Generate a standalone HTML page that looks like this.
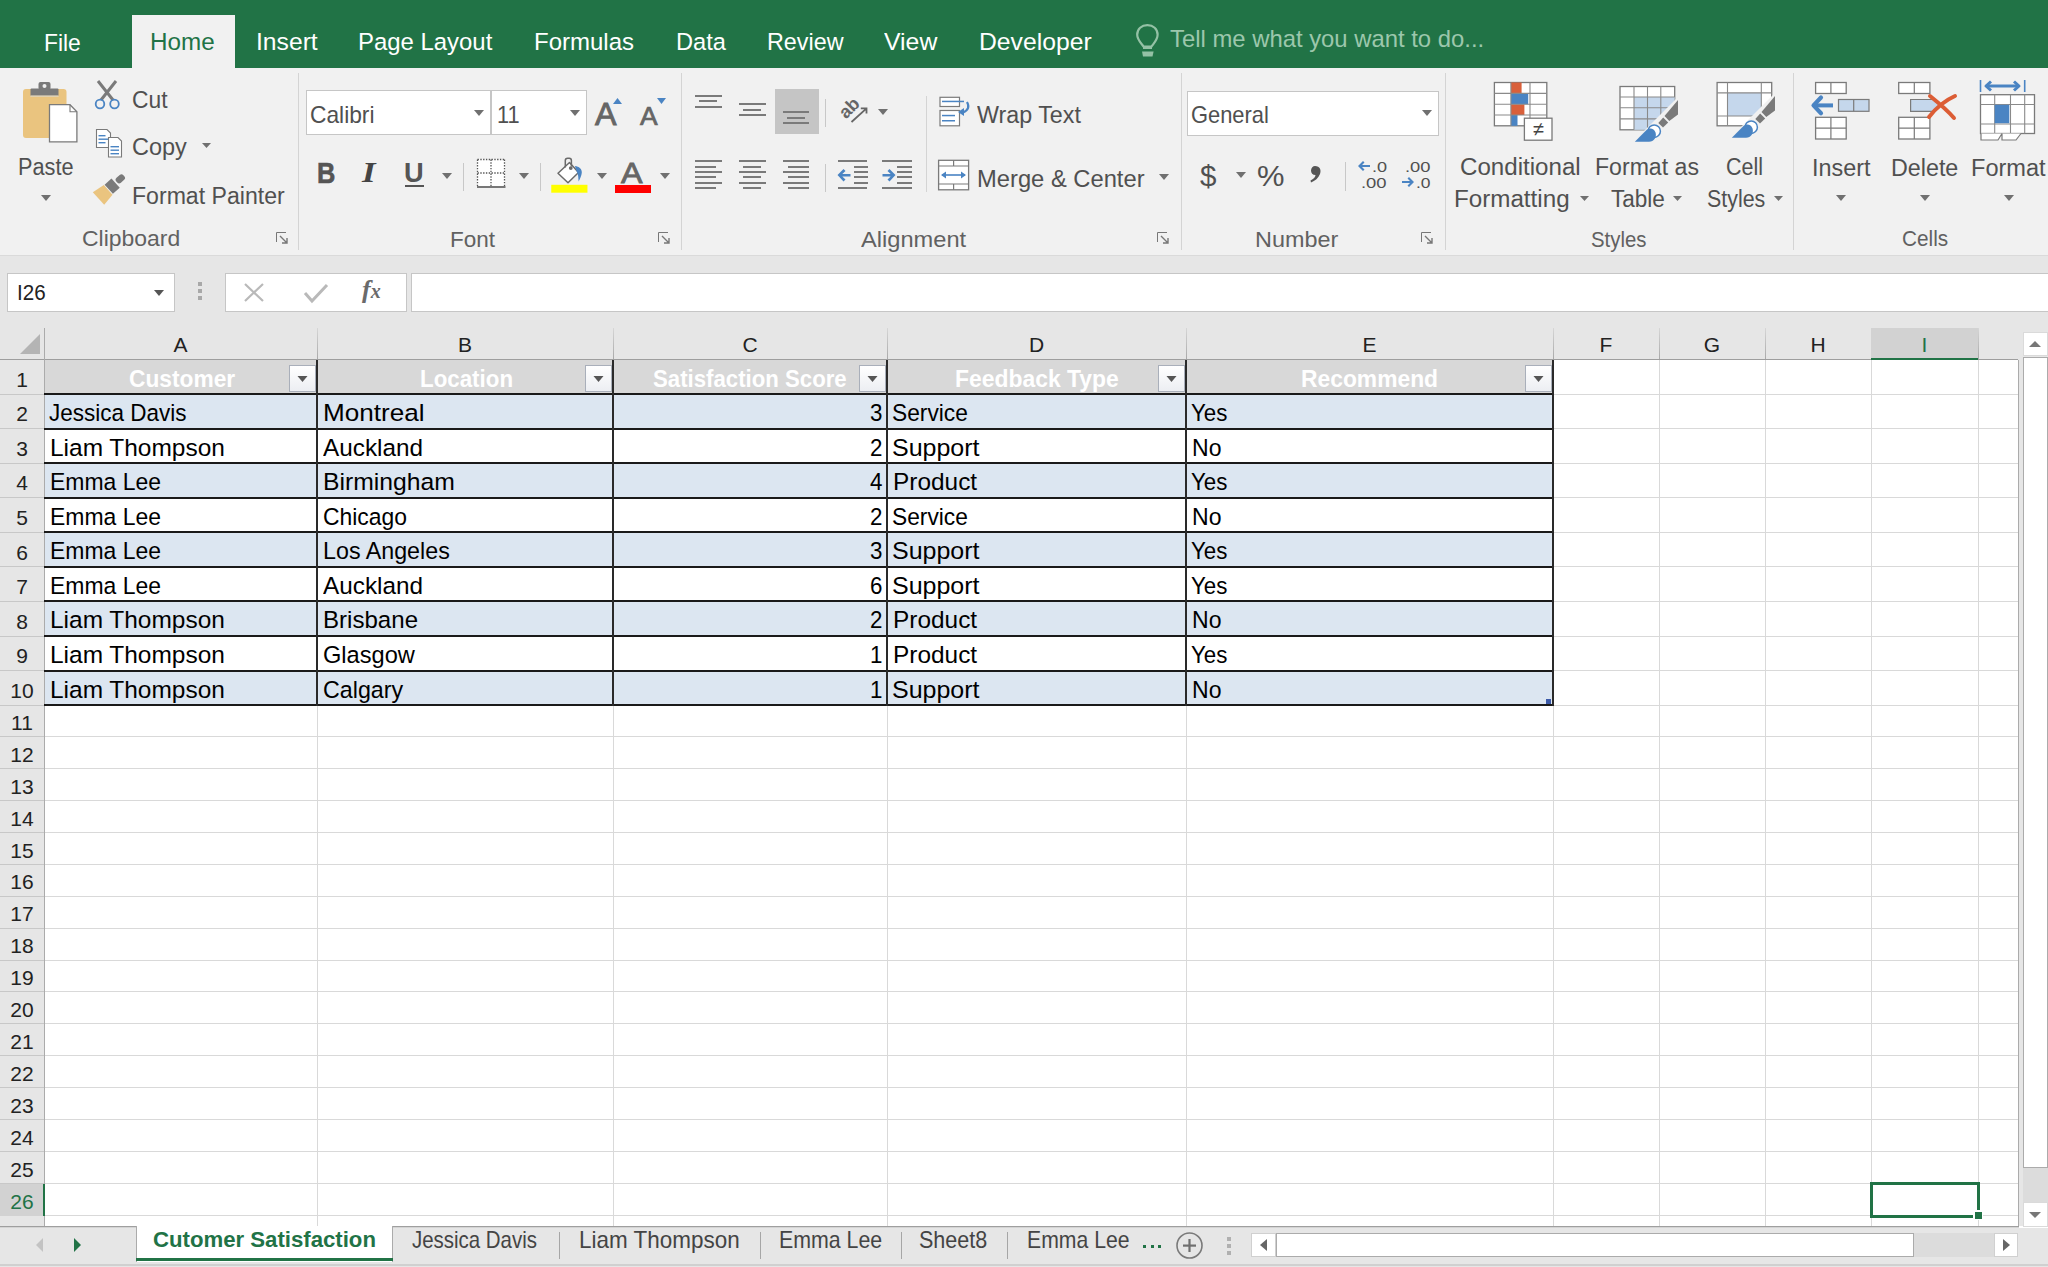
<!DOCTYPE html>
<html><head><meta charset="utf-8"><style>
html,body{margin:0;padding:0;width:2048px;height:1267px;overflow:hidden;background:#fff;}
.t{position:absolute;white-space:nowrap;line-height:1;font-family:"Liberation Sans",sans-serif;}
.r{position:absolute;}
svg{position:absolute;overflow:visible;}
</style></head><body>
<div class="r" style="left:0px;top:0px;width:2048px;height:68px;background:#217346;"></div><div class="r" style="left:132px;top:15px;width:103px;height:53px;background:#f1f1f1;"></div><div class="t" style="left:43.80px;top:31.18px;font-size:24.5px;color:#fff;font-weight:normal;transform:scaleX(0.9329);transform-origin:0 0;">File</div><div class="t" style="left:149.80px;top:30.18px;font-size:24.5px;color:#217346;font-weight:normal;transform:scaleX(0.9891);transform-origin:0 0;">Home</div><div class="t" style="left:255.90px;top:30.18px;font-size:24.5px;color:#fff;font-weight:normal;transform:scaleX(1.0073);transform-origin:0 0;">Insert</div><div class="t" style="left:358.40px;top:30.18px;font-size:24.5px;color:#fff;font-weight:normal;transform:scaleX(0.9762);transform-origin:0 0;">Page Layout</div><div class="t" style="left:534.20px;top:30.18px;font-size:24.5px;color:#fff;font-weight:normal;transform:scaleX(0.9798);transform-origin:0 0;">Formulas</div><div class="t" style="left:675.80px;top:30.18px;font-size:24.5px;color:#fff;font-weight:normal;transform:scaleX(0.9649);transform-origin:0 0;">Data</div><div class="t" style="left:767.30px;top:30.18px;font-size:24.5px;color:#fff;font-weight:normal;transform:scaleX(0.9520);transform-origin:0 0;">Review</div><div class="t" style="left:884.00px;top:30.18px;font-size:24.5px;color:#fff;font-weight:normal;transform:scaleX(1.0119);transform-origin:0 0;">View</div><div class="t" style="left:979.30px;top:30.18px;font-size:24.5px;color:#fff;font-weight:normal;transform:scaleX(1.0088);transform-origin:0 0;">Developer</div><div class="t" style="left:1170.30px;top:27.00px;font-size:24px;color:#9cc7ac;font-weight:normal;transform:scaleX(0.9937);transform-origin:0 0;">Tell me what you want to do...</div><svg style="left:1134px;top:23px" width="28" height="36"><path d="M9.5,23.5 C6.5,19.5 3.2,16.5 3.2,11.8 C3.2,5.8 7.6,2.2 13.4,2.2 C19.2,2.2 23.6,5.8 23.6,11.8 C23.6,16.5 20.5,19.5 17.5,23.5 Z" fill="none" stroke="#94c1a5" stroke-width="2.2" stroke-linejoin="round"/><rect x="9" y="23.5" width="9" height="2.5" fill="#94c1a5"/><polygon points="8,28.5 19.6,28.5 18.5,33.5 9,33.5" fill="#94c1a5"/></svg><div class="r" style="left:0px;top:68px;width:2048px;height:188px;background:#f1f1f1;"></div><div class="r" style="left:0px;top:255px;width:2048px;height:2px;background:#dadada;"></div><div class="r" style="left:298px;top:73px;width:1px;height:177px;background:#d4d4d4;"></div><div class="r" style="left:681px;top:73px;width:1px;height:177px;background:#d4d4d4;"></div><div class="r" style="left:1181px;top:73px;width:1px;height:177px;background:#d4d4d4;"></div><div class="r" style="left:1445px;top:73px;width:1px;height:177px;background:#d4d4d4;"></div><div class="r" style="left:1793px;top:73px;width:1px;height:177px;background:#d4d4d4;"></div><div class="t" style="left:81.80px;top:228.38px;font-size:22.5px;color:#616161;font-weight:normal;transform:scaleX(1.0197);transform-origin:0 0;">Clipboard</div><svg style="left:276px;top:232px" width="13" height="13"><path d="M0.5,10 V0.5 H10" fill="none" stroke="#777" stroke-width="1"/><path d="M4,4 L11,11 M11,6 V11 H6" fill="none" stroke="#777" stroke-width="1.4"/></svg><div class="t" style="left:450.15px;top:228.80px;font-size:22px;color:#616161;font-weight:normal;transform:scaleX(1.0239);transform-origin:0 0;">Font</div><svg style="left:658px;top:232px" width="13" height="13"><path d="M0.5,10 V0.5 H10" fill="none" stroke="#777" stroke-width="1"/><path d="M4,4 L11,11 M11,6 V11 H6" fill="none" stroke="#777" stroke-width="1.4"/></svg><div class="t" style="left:860.90px;top:228.57px;font-size:22.5px;color:#616161;font-weight:normal;transform:scaleX(1.0509);transform-origin:0 0;">Alignment</div><svg style="left:1157px;top:232px" width="13" height="13"><path d="M0.5,10 V0.5 H10" fill="none" stroke="#777" stroke-width="1"/><path d="M4,4 L11,11 M11,6 V11 H6" fill="none" stroke="#777" stroke-width="1.4"/></svg><div class="t" style="left:1254.60px;top:228.57px;font-size:22.5px;color:#616161;font-weight:normal;transform:scaleX(1.0402);transform-origin:0 0;">Number</div><svg style="left:1421px;top:232px" width="13" height="13"><path d="M0.5,10 V0.5 H10" fill="none" stroke="#777" stroke-width="1"/><path d="M4,4 L11,11 M11,6 V11 H6" fill="none" stroke="#777" stroke-width="1.4"/></svg><div class="t" style="left:1590.90px;top:228.80px;font-size:22px;color:#616161;font-weight:normal;transform:scaleX(0.9258);transform-origin:0 0;">Styles</div><div class="t" style="left:1901.50px;top:228.40px;font-size:22px;color:#616161;font-weight:normal;transform:scaleX(0.9438);transform-origin:0 0;">Cells</div><svg style="left:18px;top:78px" width="64" height="68">
<rect x="5" y="11" width="43.5" height="49" rx="3" fill="#eac47f"/>
<rect x="12.5" y="10.5" width="28" height="8" rx="1" fill="#7a7a7a"/>
<rect x="20.5" y="4" width="12" height="8" rx="2" fill="#7a7a7a"/>
<circle cx="26.5" cy="8" r="2" fill="#f0f0f0"/>
<rect x="12.5" y="17.5" width="28" height="1.2" fill="#f7e7c6"/>
<path d="M31.5,26.7 H52 L58.9,33.7 V63.8 H31.5 Z" fill="#fff" stroke="#7a7a7a" stroke-width="1.3"/>
<path d="M52,26.7 V33.7 H58.9" fill="none" stroke="#7a7a7a" stroke-width="1.1"/>
</svg><div class="t" style="left:17.50px;top:156.15px;font-size:23px;color:#505050;font-weight:normal;transform:scaleX(0.9444);transform-origin:0 0;">Paste</div><svg style="left:41.0px;top:195.0px" width="10" height="6"><polygon points="0,0 10,0 5.0,6" fill="#707070"/></svg><svg style="left:92px;top:79px" width="32" height="34">
<path d="M6,2 L21,21 M24,2 L9,21" stroke="#7a7a7a" stroke-width="3" fill="none"/>
<circle cx="8" cy="25" r="4.3" fill="none" stroke="#4a84c3" stroke-width="1.8"/>
<circle cx="22.5" cy="25" r="4.3" fill="none" stroke="#4a84c3" stroke-width="1.8"/>
</svg><div class="t" style="left:131.50px;top:88.93px;font-size:23.5px;color:#505050;font-weight:normal;transform:scaleX(0.9715);transform-origin:0 0;">Cut</div><svg style="left:94px;top:127px" width="32" height="34">
<path d="M2.5,2.5 H13 L16.5,6 V20.5 H2.5 Z" fill="#fff" stroke="#7a7a7a" stroke-width="1.1"/>
<rect x="4.5" y="8" width="7" height="1.4" fill="#4a84c3"/><rect x="4.5" y="11.5" width="10" height="1.4" fill="#4a84c3"/><rect x="4.5" y="15" width="7" height="1.4" fill="#4a84c3"/>
<path d="M14.5,10.5 H24 L27.5,14 V30 H14.5 Z" fill="#fff" stroke="#7a7a7a" stroke-width="1.1"/>
<rect x="16.5" y="19" width="8.5" height="1.4" fill="#4a84c3"/><rect x="16.5" y="22.5" width="8.5" height="1.4" fill="#4a84c3"/><rect x="16.5" y="26" width="8.5" height="1.4" fill="#4a84c3"/>
</svg><div class="t" style="left:131.50px;top:136.32px;font-size:23.5px;color:#505050;font-weight:normal;transform:scaleX(0.9987);transform-origin:0 0;">Copy</div><svg style="left:202.2px;top:142.7px" width="9" height="5"><polygon points="0,0 9,0 4.5,5" fill="#707070"/></svg><svg style="left:88px;top:170px" width="40" height="40">
<g transform="translate(10.5,28.5) rotate(-42)">
<polygon points="0,-8.5 13,-6.5 13,6.5 0,8.5" fill="#eac47f"/>
<rect x="13.8" y="-6.2" width="9.2" height="12.4" fill="#7a7a7a"/>
<rect x="24.6" y="-3.3" width="9.5" height="6.6" rx="2.6" fill="#7a7a7a"/>
</g>
</svg><div class="t" style="left:131.50px;top:184.72px;font-size:23.5px;color:#505050;font-weight:normal;transform:scaleX(0.9823);transform-origin:0 0;">Format Painter</div><div class="r" style="left:306px;top:90px;width:185px;height:45px;background:#fff;box-sizing:border-box;border:1px solid #c6c6c6"></div><div class="r" style="left:491px;top:90px;width:96px;height:45px;background:#fff;box-sizing:border-box;border:1px solid #c6c6c6"></div><div class="t" style="left:309.50px;top:102.60px;font-size:24px;color:#505050;font-weight:normal;transform:scaleX(0.9480);transform-origin:0 0;">Calibri</div><svg style="left:474.0px;top:110.2px" width="10" height="6"><polygon points="0,0 10,0 5.0,6" fill="#707070"/></svg><div class="t" style="left:496.90px;top:102.60px;font-size:24px;color:#505050;font-weight:normal;transform:scaleX(0.9095);transform-origin:0 0;">11</div><svg style="left:569.7px;top:110.2px" width="10" height="6"><polygon points="0,0 10,0 5.0,6" fill="#707070"/></svg><div class="t" style="left:594.70px;top:99.35px;font-size:31px;color:#666;font-weight:normal;transform:scaleX(1.0400);transform-origin:0 0;-webkit-text-stroke:0.9px #666;">A</div><svg style="left:613px;top:98px" width="10" height="6"><polygon points="0,6 9,6 4.5,0" fill="#4a84c3"/></svg><div class="t" style="left:639.60px;top:104.45px;font-size:25px;color:#666;font-weight:normal;transform:scaleX(1.0567);transform-origin:0 0;-webkit-text-stroke:0.7px #666;">A</div><svg style="left:656.5px;top:98px" width="10" height="6"><polygon points="0,0 9,0 4.5,6" fill="#4a84c3"/></svg><div class="t" style="left:317.30px;top:159.35px;font-size:29px;color:#555;font-weight:bold;transform:scaleX(0.8764);transform-origin:0 0;-webkit-text-stroke:0.6px #555;">B</div><div class="t" style="left:362px;top:158px;font-size:29px;color:#444;font-style:italic;font-family:'Liberation Serif',serif;font-weight:bold;transform:scaleX(1.2);transform-origin:0 0">I</div><div class="t" style="left:403.70px;top:159.20px;font-size:28px;color:#555;font-weight:bold;transform:scaleX(0.9722);transform-origin:0 0;">U</div><div class="r" style="left:405px;top:185px;width:19px;height:1.6px;background:#555;"></div><svg style="left:442.4px;top:172.5px" width="10" height="6"><polygon points="0,0 10,0 5.0,6" fill="#707070"/></svg><div class="r" style="left:463px;top:163px;width:1px;height:28px;background:#c8c8c8;"></div><svg style="left:476px;top:158px" width="31" height="31">
<rect x="1" y="1" width="28" height="28" fill="#fff"/>
<path d="M1.5,1.5 H28.5 M28.5,1.5 V28.5 M1.5,1.5 V28.5 M15,1.5 V28.5 M1.5,15 H28.5" stroke="#555" stroke-width="1.3" stroke-dasharray="1.4,1.4" fill="none"/>
<rect x="1" y="28" width="28.5" height="2" fill="#777"/>
</svg><svg style="left:519.3px;top:172.5px" width="10" height="6"><polygon points="0,0 10,0 5.0,6" fill="#707070"/></svg><div class="r" style="left:540px;top:163px;width:1px;height:28px;background:#c8c8c8;"></div><svg style="left:551px;top:155px" width="38" height="40">
<path d="M7,18.2 L18.5,7.5 L27.5,17.5 L17,27.8 Z" fill="#fff" stroke="#6a6a6a" stroke-width="1.5" stroke-linejoin="round"/>
<path d="M14.3,12.5 V5.5 Q14.3,3.2 16.6,3.2 H18.3 Q20.4,3.2 20.4,5.5 V11.5" fill="none" stroke="#6a6a6a" stroke-width="1.5"/>
<circle cx="19.8" cy="13.1" r="1.9" fill="#6a6a6a"/>
<path d="M23.9,11 C28,11.5 31.2,14 30.8,17.8 C30.5,21 29,24 27.6,26.4 C27.2,22.5 27.6,19.5 25.6,16.2 Z" fill="#4a84c3"/>
<rect x="0.25" y="29.8" width="36.2" height="7.9" fill="#ffff00"/>
</svg><svg style="left:596.6px;top:172.5px" width="10" height="6"><polygon points="0,0 10,0 5.0,6" fill="#707070"/></svg><div class="t" style="left:620.60px;top:158.10px;font-size:30px;color:#666;font-weight:normal;transform:scaleX(1.0746);transform-origin:0 0;-webkit-text-stroke:0.9px #666;">A</div><div class="r" style="left:615.3px;top:184.8px;width:35.6px;height:7.9px;background:#ff0000;"></div><svg style="left:660.0px;top:172.5px" width="10" height="6"><polygon points="0,0 10,0 5.0,6" fill="#707070"/></svg><div class="r" style="left:695px;top:95px;width:27px;height:2px;background:#7a7a7a;"></div><div class="r" style="left:699px;top:100px;width:18px;height:2px;background:#7a7a7a;"></div><div class="r" style="left:695px;top:106px;width:27px;height:2px;background:#7a7a7a;"></div><div class="r" style="left:739px;top:103px;width:27px;height:2px;background:#7a7a7a;"></div><div class="r" style="left:743px;top:109px;width:18px;height:2px;background:#7a7a7a;"></div><div class="r" style="left:739px;top:114px;width:27px;height:2px;background:#7a7a7a;"></div><div class="r" style="left:775px;top:89px;width:44px;height:45px;background:#c5c5c5;"></div><div class="r" style="left:783px;top:111px;width:26px;height:2px;background:#7a7a7a;"></div><div class="r" style="left:787px;top:117px;width:18px;height:2px;background:#7a7a7a;"></div><div class="r" style="left:783px;top:122px;width:26px;height:2px;background:#7a7a7a;"></div><div class="r" style="left:824.7px;top:98.5px;width:1px;height:28.5px;background:#c8c8c8;"></div><svg style="left:836px;top:94px" width="36" height="34">
<text x="0" y="0" transform="translate(10,25.5) rotate(-45)" font-family="Liberation Sans" font-size="18" font-weight="bold" fill="#666">ab</text>
<path d="M15.5,28 L30,14.8 M24.8,14.3 H30.5 V19.5" fill="none" stroke="#666" stroke-width="1.8"/>
</svg><svg style="left:878.2px;top:108.5px" width="10" height="6"><polygon points="0,0 10,0 5.0,6" fill="#707070"/></svg><div class="r" style="left:695px;top:160px;width:27px;height:2px;background:#7a7a7a;"></div><div class="r" style="left:695px;top:166px;width:21px;height:2px;background:#7a7a7a;"></div><div class="r" style="left:695px;top:171px;width:27px;height:2px;background:#7a7a7a;"></div><div class="r" style="left:695px;top:176px;width:21px;height:2px;background:#7a7a7a;"></div><div class="r" style="left:695px;top:182px;width:27px;height:2px;background:#7a7a7a;"></div><div class="r" style="left:695px;top:187px;width:21px;height:2px;background:#7a7a7a;"></div><div class="r" style="left:739px;top:160px;width:27px;height:2px;background:#7a7a7a;"></div><div class="r" style="left:743px;top:166px;width:18px;height:2px;background:#7a7a7a;"></div><div class="r" style="left:739px;top:171px;width:27px;height:2px;background:#7a7a7a;"></div><div class="r" style="left:743px;top:176px;width:18px;height:2px;background:#7a7a7a;"></div><div class="r" style="left:739px;top:182px;width:27px;height:2px;background:#7a7a7a;"></div><div class="r" style="left:743px;top:187px;width:18px;height:2px;background:#7a7a7a;"></div><div class="r" style="left:783px;top:160px;width:26px;height:2px;background:#7a7a7a;"></div><div class="r" style="left:788px;top:166px;width:21px;height:2px;background:#7a7a7a;"></div><div class="r" style="left:783px;top:171px;width:26px;height:2px;background:#7a7a7a;"></div><div class="r" style="left:788px;top:176px;width:21px;height:2px;background:#7a7a7a;"></div><div class="r" style="left:783px;top:182px;width:26px;height:2px;background:#7a7a7a;"></div><div class="r" style="left:788px;top:187px;width:21px;height:2px;background:#7a7a7a;"></div><div class="r" style="left:824.7px;top:163.7px;width:1px;height:28.5px;background:#c8c8c8;"></div><div class="r" style="left:838px;top:160px;width:29px;height:2px;background:#7a7a7a;"></div><div class="r" style="left:854px;top:166px;width:14px;height:2px;background:#7a7a7a;"></div><div class="r" style="left:854px;top:171px;width:14px;height:2px;background:#7a7a7a;"></div><div class="r" style="left:854px;top:176px;width:14px;height:2px;background:#7a7a7a;"></div><div class="r" style="left:854px;top:182px;width:14px;height:2px;background:#7a7a7a;"></div><div class="r" style="left:838px;top:187px;width:29px;height:2px;background:#7a7a7a;"></div><div class="r" style="left:882px;top:160px;width:30px;height:2px;background:#7a7a7a;"></div><div class="r" style="left:897px;top:166px;width:15px;height:2px;background:#7a7a7a;"></div><div class="r" style="left:897px;top:171px;width:15px;height:2px;background:#7a7a7a;"></div><div class="r" style="left:897px;top:176px;width:15px;height:2px;background:#7a7a7a;"></div><div class="r" style="left:897px;top:182px;width:15px;height:2px;background:#7a7a7a;"></div><div class="r" style="left:882px;top:187px;width:30px;height:2px;background:#7a7a7a;"></div><svg style="left:836px;top:168px" width="16" height="14"><path d="M1.5,7 L7.5,1 L9.5,3 L6.3,6 H14.5 V8.5 H6.3 L9.5,11.5 L7.5,13.5 Z" fill="#4a84c3"/></svg><svg style="left:881px;top:168px" width="16" height="14"><path d="M14.5,7 L8.5,1 L6.5,3 L9.7,6 H1.5 V8.5 H9.7 L6.5,11.5 L8.5,13.5 Z" fill="#4a84c3"/></svg><div class="r" style="left:926px;top:96px;width:1px;height:96px;background:#d4d4d4;"></div><svg style="left:938px;top:95px" width="36" height="34">
<rect x="2" y="2.3" width="19.5" height="9.2" fill="#fff" stroke="#7a7a7a" stroke-width="1.2"/>
<rect x="2" y="15.5" width="19.5" height="15.3" fill="#fff" stroke="#7a7a7a" stroke-width="1.2"/>
<rect x="4" y="5.7" width="22" height="1.5" fill="#4a84c3"/>
<rect x="4" y="19.8" width="13" height="1.5" fill="#4a84c3"/>
<rect x="4" y="25" width="13" height="1.5" fill="#4a84c3"/>
<path d="M29,7 Q33,14 25,17.5" fill="none" stroke="#4a84c3" stroke-width="2.2"/>
<path d="M20,17 L26,13 L26,21 Z" fill="#4a84c3"/>
</svg><div class="t" style="left:976.60px;top:103.93px;font-size:23.5px;color:#505050;font-weight:normal;transform:scaleX(0.9902);transform-origin:0 0;">Wrap Text</div><svg style="left:936px;top:158px" width="36" height="34">
<rect x="2.6" y="2.3" width="30" height="29.5" fill="#fff" stroke="#7a7a7a" stroke-width="1.3"/>
<path d="M2.6,8 H32.6 M2.6,26 H32.6 M17.6,2.3 V8 M17.6,26 V31.8" stroke="#7a7a7a" stroke-width="1.2"/>
<path d="M6,17 H29" stroke="#4a84c3" stroke-width="1.6"/>
<path d="M5,17 L10,13.5 V20.5 Z M30,17 L25,13.5 V20.5 Z" fill="#4a84c3"/>
</svg><div class="t" style="left:976.60px;top:167.72px;font-size:23.5px;color:#505050;font-weight:normal;transform:scaleX(1.0102);transform-origin:0 0;">Merge &amp; Center</div><svg style="left:1158.5px;top:173.7px" width="10" height="6"><polygon points="0,0 10,0 5.0,6" fill="#707070"/></svg><div class="r" style="left:1187px;top:91px;width:252px;height:45px;background:#fff;box-sizing:border-box;border:1px solid #c6c6c6"></div><div class="t" style="left:1190.60px;top:102.50px;font-size:24px;color:#505050;font-weight:normal;transform:scaleX(0.9118);transform-origin:0 0;">General</div><svg style="left:1421.5px;top:110.1px" width="10" height="6"><polygon points="0,0 10,0 5.0,6" fill="#707070"/></svg><div class="t" style="left:1199.90px;top:161.20px;font-size:30px;color:#505050;font-weight:normal;transform:scaleX(0.9850);transform-origin:0 0;">$</div><svg style="left:1235.5px;top:172.3px" width="10" height="6"><polygon points="0,0 10,0 5.0,6" fill="#707070"/></svg><div class="t" style="left:1257.20px;top:161.40px;font-size:30px;color:#505050;font-weight:normal;transform:scaleX(1.0300);transform-origin:0 0;">%</div><svg style="left:1307px;top:164px" width="16" height="20"><path d="M8,2 C13,2 14.5,6 13,10 C11.5,14 8,17 4,18.5 L3.5,16.5 C6.5,15 8.5,13 8.5,11 C5.5,11 4,9 4,6.5 C4,4 6,2 8,2 Z" fill="#555"/></svg><div class="r" style="left:1344.5px;top:162.2px;width:1px;height:28.5px;background:#c8c8c8;"></div><div class="t" style="left:1371.60px;top:158.72px;font-size:15.5px;color:#505050;font-weight:normal;transform:scaleX(1.1667);transform-origin:0 0;">.0</div><div class="t" style="left:1361.10px;top:174.52px;font-size:15.5px;color:#505050;font-weight:normal;transform:scaleX(1.1882);transform-origin:0 0;">.00</div><svg style="left:1357px;top:160px" width="14" height="13"><path d="M1,6 L6,1 L7.5,2.5 L5,5 H13 V7 H5 L7.5,9.5 L6,11 Z" fill="#4a84c3"/></svg><div class="t" style="left:1404.60px;top:158.72px;font-size:15.5px;color:#505050;font-weight:normal;transform:scaleX(1.1836);transform-origin:0 0;">.00</div><div class="t" style="left:1415.50px;top:174.52px;font-size:15.5px;color:#505050;font-weight:normal;transform:scaleX(1.1281);transform-origin:0 0;">.0</div><svg style="left:1401px;top:175.5px" width="14" height="13"><path d="M13,6 L8,1 L6.5,2.5 L9,5 H1 V7 H9 L6.5,9.5 L8,11 Z" fill="#4a84c3"/></svg><svg style="left:1492px;top:80px" width="64" height="64">
<rect x="2.4" y="2.5" width="52.4" height="43.3" fill="#fff" stroke="#7a7a7a" stroke-width="1.3"/>
<rect x="18.9" y="2.5" width="10.7" height="10.9" fill="#d9603b"/>
<rect x="18.9" y="13.4" width="17.3" height="10.9" fill="#4a84c3"/>
<rect x="18.9" y="24.3" width="13.5" height="10.7" fill="#d9603b"/>
<rect x="18.9" y="35" width="6.6" height="10.8" fill="#4a84c3"/>
<path d="M2.4,13.4 H54.8 M2.4,24.3 H54.8 M2.4,35 H54.8 M18.9,2.5 V45.8 M38,2.5 V45.8" stroke="#8a8a8a" stroke-width="1.1" fill="none"/>
<rect x="32.4" y="38.2" width="27.6" height="22" fill="#fff" stroke="#7a7a7a" stroke-width="1.3"/>
<text x="46.2" y="56" text-anchor="middle" font-family="Liberation Sans" font-size="20" fill="#444">&#8800;</text>
</svg><div class="t" style="left:1459.90px;top:155.62px;font-size:23.5px;color:#505050;font-weight:normal;transform:scaleX(1.0262);transform-origin:0 0;">Conditional</div><div class="t" style="left:1453.90px;top:187.72px;font-size:23.5px;color:#505050;font-weight:normal;transform:scaleX(1.0291);transform-origin:0 0;">Formatting</div><svg style="left:1579.5px;top:195.8px" width="9" height="5"><polygon points="0,0 9,0 4.5,5" fill="#707070"/></svg><svg style="left:1618px;top:84px" width="64" height="62">
<rect x="2" y="2.5" width="54.7" height="43.3" fill="#fff" stroke="#7a7a7a" stroke-width="1.3"/>
<rect x="16" y="13" width="40.7" height="32.8" fill="#c5d7ec"/>
<path d="M2,13 H56.7 M2,23.8 H56.7 M2,34.9 H56.7 M16,2.5 V45.8 M29.5,2.5 V45.8 M42.8,2.5 V45.8" stroke="#8a8a8a" stroke-width="1.1" fill="none"/>
<path d="M25,48 L59,14 L66,14 L66,66 L25,66 Z" fill="#f1f1f1"/>
<path d="M46.5,31.9 L60,16 L60,30.5 L51.3,37 Z" fill="#7a7a7a"/>
<path d="M40.3,38.9 L45.2,33.5 L50.2,38.4 L45,43.5 Z" fill="#7a7a7a"/>
<circle cx="36.2" cy="47.2" r="6.2" fill="#fff" stroke="#4a84c3" stroke-width="1.5"/>
<path d="M16.8,57.8 L28,46.5 C31,43.5 36,44 37.5,48.5 C39,53 36,57.8 31,57.8 Z" fill="#4a84c3"/>
</svg><div class="t" style="left:1595.10px;top:155.62px;font-size:23.5px;color:#505050;font-weight:normal;transform:scaleX(0.9825);transform-origin:0 0;">Format as</div><div class="t" style="left:1611.20px;top:187.72px;font-size:23.5px;color:#505050;font-weight:normal;transform:scaleX(0.9597);transform-origin:0 0;">Table</div><svg style="left:1673.3px;top:195.8px" width="9" height="5"><polygon points="0,0 9,0 4.5,5" fill="#707070"/></svg><svg style="left:1715px;top:80px" width="64" height="62">
<rect x="2.1" y="2.5" width="54.6" height="43.3" fill="#fff" stroke="#7a7a7a" stroke-width="1.3"/>
<rect x="12.5" y="12.9" width="33.8" height="23.1" fill="#c5d7ec"/>
<path d="M2.1,12.9 H56.7 M2.1,36 H56.7 M12.5,2.5 V45.8 M46.3,2.5 V45.8" stroke="#8a8a8a" stroke-width="1.1" fill="none"/>
<path d="M25,48 L59,14 L66,14 L66,66 L25,66 Z" fill="#f1f1f1"/>
<path d="M46.5,31.9 L60,16 L60,30.5 L51.3,37 Z" fill="#7a7a7a"/>
<path d="M40.3,38.9 L45.2,33.5 L50.2,38.4 L45,43.5 Z" fill="#7a7a7a"/>
<circle cx="36.2" cy="47.2" r="6.2" fill="#fff" stroke="#4a84c3" stroke-width="1.5"/>
<path d="M16.8,57.8 L28,46.5 C31,43.5 36,44 37.5,48.5 C39,53 36,57.8 31,57.8 Z" fill="#4a84c3"/>
</svg><div class="t" style="left:1725.60px;top:155.62px;font-size:23.5px;color:#505050;font-weight:normal;transform:scaleX(0.9127);transform-origin:0 0;">Cell</div><div class="t" style="left:1706.50px;top:187.72px;font-size:23.5px;color:#505050;font-weight:normal;transform:scaleX(0.9104);transform-origin:0 0;">Styles</div><svg style="left:1774.3px;top:195.8px" width="9" height="5"><polygon points="0,0 9,0 4.5,5" fill="#707070"/></svg><svg style="left:1809px;top:80px" width="64" height="62">
<rect x="6.6" y="2.5" width="30.6" height="11" fill="#fff" stroke="#7a7a7a" stroke-width="1.3"/>
<path d="M21.9,2.5 V13.5" stroke="#7a7a7a" stroke-width="1.2"/>
<rect x="6.6" y="37.3" width="30.6" height="21.7" fill="#fff" stroke="#7a7a7a" stroke-width="1.3"/>
<path d="M21.9,37.3 V59 M6.6,48.2 H37.2" stroke="#7a7a7a" stroke-width="1.2"/>
<rect x="29.5" y="19.5" width="30.5" height="11.8" fill="#c5d7ec" stroke="#7a7a7a" stroke-width="1.2"/>
<path d="M44.7,19.5 V31.3" stroke="#7a7a7a" stroke-width="1.2"/>
<path d="M5,25.4 H24" stroke="#4a84c3" stroke-width="4"/>
<path d="M12,17.5 L4.5,25.4 L12,33.3" stroke="#4a84c3" stroke-width="4.2" fill="none" stroke-linejoin="round" stroke-linecap="round"/>
</svg><div class="t" style="left:1811.50px;top:156.53px;font-size:23.5px;color:#505050;font-weight:normal;transform:scaleX(0.9940);transform-origin:0 0;">Insert</div><svg style="left:1836.3px;top:194.9px" width="10" height="6"><polygon points="0,0 10,0 5.0,6" fill="#707070"/></svg><svg style="left:1896px;top:80px" width="64" height="62">
<rect x="2.7" y="2.5" width="31.2" height="11" fill="#fff" stroke="#7a7a7a" stroke-width="1.3"/>
<path d="M18.3,2.5 V13.5" stroke="#7a7a7a" stroke-width="1.2"/>
<rect x="2.7" y="37.3" width="31.2" height="21.7" fill="#fff" stroke="#7a7a7a" stroke-width="1.3"/>
<path d="M18.3,37.3 V59 M2.7,48.2 H33.9" stroke="#7a7a7a" stroke-width="1.2"/>
<path d="M14.6,19.5 H38.4 L44,25.4 L38.4,31.3 H14.6 Z" fill="#c5d7ec" stroke="#7a7a7a" stroke-width="1.2"/>
<path d="M34,16 C44,24 52,31 58,38 M59,16 C50,20 40,28 33,37" stroke="#dc5d35" stroke-width="4" fill="none" stroke-linecap="round"/>
</svg><div class="t" style="left:1890.80px;top:156.53px;font-size:23.5px;color:#505050;font-weight:normal;transform:scaleX(0.9909);transform-origin:0 0;">Delete</div><svg style="left:1919.7px;top:194.9px" width="10" height="6"><polygon points="0,0 10,0 5.0,6" fill="#707070"/></svg><svg style="left:1977px;top:78px" width="71" height="66">
<path d="M3.5,2 V14 M47.7,2 V14" stroke="#4a84c3" stroke-width="1.6" fill="none"/>
<path d="M10,8 H41" stroke="#4a84c3" stroke-width="3" fill="none"/>
<path d="M14,3.5 L9,8 L14,12.5 M37,3.5 L42,8 L37,12.5" stroke="#4a84c3" stroke-width="3" fill="none" stroke-linejoin="round"/>
<rect x="3.5" y="16.7" width="54" height="38.8" fill="#fff" stroke="#7a7a7a" stroke-width="1.3"/>
<path d="M3.5,26.5 H57.5 M3.5,46 H57.5 M17.7,16.7 V55.5 M33.5,16.7 V55.5 M47.7,16.7 V55.5" stroke="#8a8a8a" stroke-width="1.1" fill="none"/>
<rect x="17.7" y="26.8" width="14.6" height="18.4" fill="#4a84c3"/>
<path d="M4,55.5 V62 H21 L25,55.5 M25,55.5 V62 H39 L44,55.5" stroke="#7a7a7a" stroke-width="1.2" fill="#fff"/>
</svg><div class="t" style="left:1971.10px;top:156.53px;font-size:23.5px;color:#505050;font-weight:normal;transform:scaleX(1.0030);transform-origin:0 0;">Format</div><svg style="left:2003.7px;top:194.9px" width="10" height="6"><polygon points="0,0 10,0 5.0,6" fill="#707070"/></svg><div class="r" style="left:0px;top:256px;width:2048px;height:72px;background:#e6e6e6;"></div><div class="r" style="left:7px;top:273px;width:168px;height:39px;background:#fff;box-sizing:border-box;border:1px solid #c6c6c6"></div><div class="t" style="left:17.10px;top:282.10px;font-size:22px;color:#222;font-weight:normal;transform:scaleX(0.9353);transform-origin:0 0;">I26</div><svg style="left:153.7px;top:289.8px" width="10" height="6"><polygon points="0,0 10,0 5.0,6" fill="#555"/></svg><div class="r" style="left:198px;top:282px;width:4px;height:4px;background:#a8a8a8;"></div><div class="r" style="left:198px;top:289px;width:4px;height:4px;background:#a8a8a8;"></div><div class="r" style="left:198px;top:296px;width:4px;height:4px;background:#a8a8a8;"></div><div class="r" style="left:225px;top:273px;width:182px;height:39px;background:#fff;box-sizing:border-box;border:1px solid #c6c6c6"></div><svg style="left:242px;top:282px" width="26" height="22"><path d="M3,2 L21,19 M21,2 L3,19" stroke="#b9b9b9" stroke-width="2.2"/></svg><svg style="left:302px;top:282px" width="28" height="22"><path d="M3,11 L10,19 L25,3" fill="none" stroke="#b9b9b9" stroke-width="3"/></svg><div class="t" style="left:362px;top:277px;font-size:26px;color:#6a6a6a;font-style:italic;font-family:'Liberation Serif',serif;font-weight:bold">f<span style="font-size:20px">x</span></div><div class="r" style="left:411px;top:273px;width:1640px;height:39px;background:#fff;box-sizing:border-box;border:1px solid #c6c6c6"></div><div class="r" style="left:0px;top:328px;width:2048px;height:32px;background:#e6e6e6;"></div><div class="r" style="left:0px;top:359px;width:44px;height:867px;background:#e6e6e6;"></div><div class="r" style="left:44px;top:360px;width:1974px;height:866px;background:#fff;"></div><div class="r" style="left:316.5px;top:328px;width:1.5px;height:31px;background:linear-gradient(#d6d6d6,#a9a9a9);"></div><div class="r" style="left:612.5px;top:328px;width:1.5px;height:31px;background:linear-gradient(#d6d6d6,#a9a9a9);"></div><div class="r" style="left:886.5px;top:328px;width:1.5px;height:31px;background:linear-gradient(#d6d6d6,#a9a9a9);"></div><div class="r" style="left:1185.5px;top:328px;width:1.5px;height:31px;background:linear-gradient(#d6d6d6,#a9a9a9);"></div><div class="r" style="left:1552.5px;top:328px;width:1.5px;height:31px;background:linear-gradient(#d6d6d6,#a9a9a9);"></div><div class="r" style="left:1658.5px;top:328px;width:1.5px;height:31px;background:linear-gradient(#d6d6d6,#a9a9a9);"></div><div class="r" style="left:1764.5px;top:328px;width:1.5px;height:31px;background:linear-gradient(#d6d6d6,#a9a9a9);"></div><div class="r" style="left:1870.5px;top:328px;width:1.5px;height:31px;background:linear-gradient(#d6d6d6,#a9a9a9);"></div><div class="r" style="left:1977.5px;top:328px;width:1.5px;height:31px;background:linear-gradient(#d6d6d6,#a9a9a9);"></div><div class="r" style="left:1871px;top:328px;width:107px;height:31px;background:#d2d2d2;"></div><div class="r" style="left:1871px;top:358px;width:107px;height:2px;background:#217346;"></div><div class="r" style="left:0px;top:359px;width:1871px;height:1px;background:#9e9e9e;"></div><div class="r" style="left:1978px;top:359px;width:40px;height:1px;background:#9e9e9e;"></div><div class="r" style="left:44px;top:328px;width:1px;height:898px;background:#ababab;"></div><svg style="left:0;top:328px" width="44" height="32"><polygon points="40,6 40,26 20,26" fill="#b4b4b4"/></svg><div class="t" style="left:44px;width:273px;text-align:center;top:334.15px;font-size:21px;color:#222">A</div><div class="t" style="left:317px;width:296px;text-align:center;top:334.15px;font-size:21px;color:#222">B</div><div class="t" style="left:613px;width:274px;text-align:center;top:334.15px;font-size:21px;color:#222">C</div><div class="t" style="left:887px;width:299px;text-align:center;top:334.15px;font-size:21px;color:#222">D</div><div class="t" style="left:1186px;width:367px;text-align:center;top:334.15px;font-size:21px;color:#222">E</div><div class="t" style="left:1553px;width:106px;text-align:center;top:334.15px;font-size:21px;color:#222">F</div><div class="t" style="left:1659px;width:106px;text-align:center;top:334.15px;font-size:21px;color:#222">G</div><div class="t" style="left:1765px;width:106px;text-align:center;top:334.15px;font-size:21px;color:#222">H</div><div class="t" style="left:1871px;width:107px;text-align:center;top:334.15px;font-size:21px;color:#217346">I</div><div class="r" style="left:317px;top:360px;width:1px;height:866px;background:#d9d9d9;"></div><div class="r" style="left:613px;top:360px;width:1px;height:866px;background:#d9d9d9;"></div><div class="r" style="left:887px;top:360px;width:1px;height:866px;background:#d9d9d9;"></div><div class="r" style="left:1186px;top:360px;width:1px;height:866px;background:#d9d9d9;"></div><div class="r" style="left:1553px;top:360px;width:1px;height:866px;background:#d9d9d9;"></div><div class="r" style="left:1659px;top:360px;width:1px;height:866px;background:#d9d9d9;"></div><div class="r" style="left:1765px;top:360px;width:1px;height:866px;background:#d9d9d9;"></div><div class="r" style="left:1871px;top:360px;width:1px;height:866px;background:#d9d9d9;"></div><div class="r" style="left:1978px;top:360px;width:1px;height:866px;background:#d9d9d9;"></div><div class="r" style="left:2018px;top:360px;width:1px;height:866px;background:#d9d9d9;"></div><div class="r" style="left:2018px;top:360px;width:1px;height:866px;background:#ababab;"></div><div class="r" style="left:45px;top:394px;width:1973px;height:1px;background:#d9d9d9;"></div><div class="r" style="left:0px;top:394px;width:44px;height:1px;background:#c8c8c8;"></div><div class="r" style="left:45px;top:428px;width:1973px;height:1px;background:#d9d9d9;"></div><div class="r" style="left:0px;top:428px;width:44px;height:1px;background:#c8c8c8;"></div><div class="r" style="left:45px;top:463px;width:1973px;height:1px;background:#d9d9d9;"></div><div class="r" style="left:0px;top:463px;width:44px;height:1px;background:#c8c8c8;"></div><div class="r" style="left:45px;top:497px;width:1973px;height:1px;background:#d9d9d9;"></div><div class="r" style="left:0px;top:497px;width:44px;height:1px;background:#c8c8c8;"></div><div class="r" style="left:45px;top:532px;width:1973px;height:1px;background:#d9d9d9;"></div><div class="r" style="left:0px;top:532px;width:44px;height:1px;background:#c8c8c8;"></div><div class="r" style="left:45px;top:566px;width:1973px;height:1px;background:#d9d9d9;"></div><div class="r" style="left:0px;top:566px;width:44px;height:1px;background:#c8c8c8;"></div><div class="r" style="left:45px;top:601px;width:1973px;height:1px;background:#d9d9d9;"></div><div class="r" style="left:0px;top:601px;width:44px;height:1px;background:#c8c8c8;"></div><div class="r" style="left:45px;top:636px;width:1973px;height:1px;background:#d9d9d9;"></div><div class="r" style="left:0px;top:636px;width:44px;height:1px;background:#c8c8c8;"></div><div class="r" style="left:45px;top:670px;width:1973px;height:1px;background:#d9d9d9;"></div><div class="r" style="left:0px;top:670px;width:44px;height:1px;background:#c8c8c8;"></div><div class="r" style="left:45px;top:705px;width:1973px;height:1px;background:#d9d9d9;"></div><div class="r" style="left:0px;top:705px;width:44px;height:1px;background:#c8c8c8;"></div><div class="r" style="left:45px;top:736px;width:1973px;height:1px;background:#d9d9d9;"></div><div class="r" style="left:0px;top:736px;width:44px;height:1px;background:#c8c8c8;"></div><div class="r" style="left:45px;top:768px;width:1973px;height:1px;background:#d9d9d9;"></div><div class="r" style="left:0px;top:768px;width:44px;height:1px;background:#c8c8c8;"></div><div class="r" style="left:45px;top:800px;width:1973px;height:1px;background:#d9d9d9;"></div><div class="r" style="left:0px;top:800px;width:44px;height:1px;background:#c8c8c8;"></div><div class="r" style="left:45px;top:832px;width:1973px;height:1px;background:#d9d9d9;"></div><div class="r" style="left:0px;top:832px;width:44px;height:1px;background:#c8c8c8;"></div><div class="r" style="left:45px;top:864px;width:1973px;height:1px;background:#d9d9d9;"></div><div class="r" style="left:0px;top:864px;width:44px;height:1px;background:#c8c8c8;"></div><div class="r" style="left:45px;top:896px;width:1973px;height:1px;background:#d9d9d9;"></div><div class="r" style="left:0px;top:896px;width:44px;height:1px;background:#c8c8c8;"></div><div class="r" style="left:45px;top:928px;width:1973px;height:1px;background:#d9d9d9;"></div><div class="r" style="left:0px;top:928px;width:44px;height:1px;background:#c8c8c8;"></div><div class="r" style="left:45px;top:960px;width:1973px;height:1px;background:#d9d9d9;"></div><div class="r" style="left:0px;top:960px;width:44px;height:1px;background:#c8c8c8;"></div><div class="r" style="left:45px;top:991px;width:1973px;height:1px;background:#d9d9d9;"></div><div class="r" style="left:0px;top:991px;width:44px;height:1px;background:#c8c8c8;"></div><div class="r" style="left:45px;top:1023px;width:1973px;height:1px;background:#d9d9d9;"></div><div class="r" style="left:0px;top:1023px;width:44px;height:1px;background:#c8c8c8;"></div><div class="r" style="left:45px;top:1055px;width:1973px;height:1px;background:#d9d9d9;"></div><div class="r" style="left:0px;top:1055px;width:44px;height:1px;background:#c8c8c8;"></div><div class="r" style="left:45px;top:1087px;width:1973px;height:1px;background:#d9d9d9;"></div><div class="r" style="left:0px;top:1087px;width:44px;height:1px;background:#c8c8c8;"></div><div class="r" style="left:45px;top:1119px;width:1973px;height:1px;background:#d9d9d9;"></div><div class="r" style="left:0px;top:1119px;width:44px;height:1px;background:#c8c8c8;"></div><div class="r" style="left:45px;top:1151px;width:1973px;height:1px;background:#d9d9d9;"></div><div class="r" style="left:0px;top:1151px;width:44px;height:1px;background:#c8c8c8;"></div><div class="r" style="left:45px;top:1183px;width:1973px;height:1px;background:#d9d9d9;"></div><div class="r" style="left:0px;top:1183px;width:44px;height:1px;background:#c8c8c8;"></div><div class="r" style="left:45px;top:1215px;width:1973px;height:1px;background:#d9d9d9;"></div><div class="r" style="left:0px;top:1215px;width:44px;height:1px;background:#c8c8c8;"></div><div class="r" style="left:0px;top:1184px;width:44px;height:32px;background:#d2d2d2;"></div><div class="r" style="left:43px;top:1184px;width:2px;height:32px;background:#217346;"></div><div class="t" style="left:0;width:44px;text-align:center;top:368.65px;font-size:21px;color:#222">1</div><div class="t" style="left:0;width:44px;text-align:center;top:403.23px;font-size:21px;color:#222">2</div><div class="t" style="left:0;width:44px;text-align:center;top:437.81px;font-size:21px;color:#222">3</div><div class="t" style="left:0;width:44px;text-align:center;top:472.39px;font-size:21px;color:#222">4</div><div class="t" style="left:0;width:44px;text-align:center;top:506.97px;font-size:21px;color:#222">5</div><div class="t" style="left:0;width:44px;text-align:center;top:541.55px;font-size:21px;color:#222">6</div><div class="t" style="left:0;width:44px;text-align:center;top:576.13px;font-size:21px;color:#222">7</div><div class="t" style="left:0;width:44px;text-align:center;top:610.71px;font-size:21px;color:#222">8</div><div class="t" style="left:0;width:44px;text-align:center;top:645.29px;font-size:21px;color:#222">9</div><div class="t" style="left:0;width:44px;text-align:center;top:679.87px;font-size:21px;color:#222">10</div><div class="t" style="left:0;width:44px;text-align:center;top:711.80px;font-size:21px;color:#222">11</div><div class="t" style="left:0;width:44px;text-align:center;top:743.73px;font-size:21px;color:#222">12</div><div class="t" style="left:0;width:44px;text-align:center;top:775.66px;font-size:21px;color:#222">13</div><div class="t" style="left:0;width:44px;text-align:center;top:807.59px;font-size:21px;color:#222">14</div><div class="t" style="left:0;width:44px;text-align:center;top:839.52px;font-size:21px;color:#222">15</div><div class="t" style="left:0;width:44px;text-align:center;top:871.45px;font-size:21px;color:#222">16</div><div class="t" style="left:0;width:44px;text-align:center;top:903.38px;font-size:21px;color:#222">17</div><div class="t" style="left:0;width:44px;text-align:center;top:935.31px;font-size:21px;color:#222">18</div><div class="t" style="left:0;width:44px;text-align:center;top:967.24px;font-size:21px;color:#222">19</div><div class="t" style="left:0;width:44px;text-align:center;top:999.17px;font-size:21px;color:#222">20</div><div class="t" style="left:0;width:44px;text-align:center;top:1031.10px;font-size:21px;color:#222">21</div><div class="t" style="left:0;width:44px;text-align:center;top:1063.03px;font-size:21px;color:#222">22</div><div class="t" style="left:0;width:44px;text-align:center;top:1094.96px;font-size:21px;color:#222">23</div><div class="t" style="left:0;width:44px;text-align:center;top:1126.89px;font-size:21px;color:#222">24</div><div class="t" style="left:0;width:44px;text-align:center;top:1158.82px;font-size:21px;color:#222">25</div><div class="t" style="left:0;width:44px;text-align:center;top:1190.75px;font-size:21px;color:#217346">26</div><div class="r" style="left:45px;top:360px;width:1508px;height:34px;background:#d8d8d8;"></div><div class="r" style="left:45px;top:394px;width:1508px;height:35px;background:#dce6f1;"></div><div class="r" style="left:45px;top:429px;width:1508px;height:34px;background:#fff;"></div><div class="r" style="left:45px;top:463px;width:1508px;height:35px;background:#dce6f1;"></div><div class="r" style="left:45px;top:498px;width:1508px;height:34px;background:#fff;"></div><div class="r" style="left:45px;top:532px;width:1508px;height:35px;background:#dce6f1;"></div><div class="r" style="left:45px;top:567px;width:1508px;height:34px;background:#fff;"></div><div class="r" style="left:45px;top:601px;width:1508px;height:35px;background:#dce6f1;"></div><div class="r" style="left:45px;top:636px;width:1508px;height:35px;background:#fff;"></div><div class="r" style="left:45px;top:671px;width:1508px;height:34px;background:#dce6f1;"></div><div class="r" style="left:44px;top:393px;width:1510px;height:2px;background:#1a1a1a;"></div><div class="r" style="left:44px;top:428px;width:1510px;height:2px;background:#1a1a1a;"></div><div class="r" style="left:44px;top:462px;width:1510px;height:2px;background:#1a1a1a;"></div><div class="r" style="left:44px;top:497px;width:1510px;height:2px;background:#1a1a1a;"></div><div class="r" style="left:44px;top:531px;width:1510px;height:2px;background:#1a1a1a;"></div><div class="r" style="left:44px;top:566px;width:1510px;height:2px;background:#1a1a1a;"></div><div class="r" style="left:44px;top:600px;width:1510px;height:2px;background:#1a1a1a;"></div><div class="r" style="left:44px;top:635px;width:1510px;height:2px;background:#1a1a1a;"></div><div class="r" style="left:44px;top:670px;width:1510px;height:2px;background:#1a1a1a;"></div><div class="r" style="left:44px;top:704px;width:1510px;height:2px;background:#1a1a1a;"></div><div class="r" style="left:316px;top:360px;width:2px;height:346px;background:#2a2a2a;"></div><div class="r" style="left:612px;top:360px;width:2px;height:346px;background:#2a2a2a;"></div><div class="r" style="left:886px;top:360px;width:2px;height:346px;background:#2a2a2a;"></div><div class="r" style="left:1185px;top:360px;width:2px;height:346px;background:#2a2a2a;"></div><div class="r" style="left:1552px;top:360px;width:2px;height:346px;background:#2a2a2a;"></div><div class="t" style="left:128.50px;top:366.90px;font-size:24px;color:#fff;font-weight:bold;transform:scaleX(0.9475);transform-origin:0 0;">Customer</div><div class="r" style="left:289px;top:365px;width:27px;height:27px;box-sizing:border-box;border:1px solid #a9afba;background:linear-gradient(#fff,#eceef2)"></div><svg style="left:289px;top:365px" width="27" height="27"><polygon points="8.5,11 18.5,11 13.5,17" fill="#555"/></svg><div class="t" style="left:419.50px;top:366.90px;font-size:24px;color:#fff;font-weight:bold;transform:scaleX(0.9304);transform-origin:0 0;">Location</div><div class="r" style="left:585px;top:365px;width:27px;height:27px;box-sizing:border-box;border:1px solid #a9afba;background:linear-gradient(#fff,#eceef2)"></div><svg style="left:585px;top:365px" width="27" height="27"><polygon points="8.5,11 18.5,11 13.5,17" fill="#555"/></svg><div class="t" style="left:653.40px;top:366.90px;font-size:24px;color:#fff;font-weight:bold;transform:scaleX(0.9250);transform-origin:0 0;">Satisfaction Score</div><div class="r" style="left:859px;top:365px;width:27px;height:27px;box-sizing:border-box;border:1px solid #a9afba;background:linear-gradient(#fff,#eceef2)"></div><svg style="left:859px;top:365px" width="27" height="27"><polygon points="8.5,11 18.5,11 13.5,17" fill="#555"/></svg><div class="t" style="left:954.80px;top:366.90px;font-size:24px;color:#fff;font-weight:bold;transform:scaleX(0.9540);transform-origin:0 0;">Feedback Type</div><div class="r" style="left:1158px;top:365px;width:27px;height:27px;box-sizing:border-box;border:1px solid #a9afba;background:linear-gradient(#fff,#eceef2)"></div><svg style="left:1158px;top:365px" width="27" height="27"><polygon points="8.5,11 18.5,11 13.5,17" fill="#555"/></svg><div class="t" style="left:1301.20px;top:366.90px;font-size:24px;color:#fff;font-weight:bold;transform:scaleX(0.9514);transform-origin:0 0;">Recommend</div><div class="r" style="left:1525px;top:365px;width:27px;height:27px;box-sizing:border-box;border:1px solid #a9afba;background:linear-gradient(#fff,#eceef2)"></div><svg style="left:1525px;top:365px" width="27" height="27"><polygon points="8.5,11 18.5,11 13.5,17" fill="#555"/></svg><div class="t" style="left:49.00px;top:400.95px;font-size:24.5px;color:#000;font-weight:normal;transform:scaleX(0.9178);transform-origin:0 0;">Jessica Davis</div><div class="t" style="left:322.50px;top:400.95px;font-size:24.5px;color:#000;font-weight:normal;transform:scaleX(1.0650);transform-origin:0 0;">Montreal</div><div class="t" style="left:869.50px;top:400.95px;font-size:24.5px;color:#000;font-weight:normal;transform:scaleX(0.9119);transform-origin:0 0;">3</div><div class="t" style="left:892.30px;top:400.95px;font-size:24.5px;color:#000;font-weight:normal;transform:scaleX(0.9289);transform-origin:0 0;">Service</div><div class="t" style="left:1191.10px;top:400.95px;font-size:24.5px;color:#000;font-weight:normal;transform:scaleX(0.9115);transform-origin:0 0;">Yes</div><div class="t" style="left:49.80px;top:435.53px;font-size:24.5px;color:#000;font-weight:normal;transform:scaleX(0.9979);transform-origin:0 0;">Liam Thompson</div><div class="t" style="left:322.50px;top:435.53px;font-size:24.5px;color:#000;font-weight:normal;transform:scaleX(0.9919);transform-origin:0 0;">Auckland</div><div class="t" style="left:869.50px;top:435.53px;font-size:24.5px;color:#000;font-weight:normal;transform:scaleX(0.9119);transform-origin:0 0;">2</div><div class="t" style="left:892.30px;top:435.53px;font-size:24.5px;color:#000;font-weight:normal;transform:scaleX(1.0201);transform-origin:0 0;">Support</div><div class="t" style="left:1192.10px;top:435.53px;font-size:24.5px;color:#000;font-weight:normal;transform:scaleX(0.9407);transform-origin:0 0;">No</div><div class="t" style="left:50.40px;top:470.12px;font-size:24.5px;color:#000;font-weight:normal;transform:scaleX(0.9370);transform-origin:0 0;">Emma Lee</div><div class="t" style="left:322.50px;top:470.12px;font-size:24.5px;color:#000;font-weight:normal;transform:scaleX(1.0084);transform-origin:0 0;">Birmingham</div><div class="t" style="left:869.50px;top:470.12px;font-size:24.5px;color:#000;font-weight:normal;transform:scaleX(0.9119);transform-origin:0 0;">4</div><div class="t" style="left:892.80px;top:470.12px;font-size:24.5px;color:#000;font-weight:normal;transform:scaleX(0.9964);transform-origin:0 0;">Product</div><div class="t" style="left:1191.10px;top:470.12px;font-size:24.5px;color:#000;font-weight:normal;transform:scaleX(0.9115);transform-origin:0 0;">Yes</div><div class="t" style="left:50.40px;top:504.69px;font-size:24.5px;color:#000;font-weight:normal;transform:scaleX(0.9370);transform-origin:0 0;">Emma Lee</div><div class="t" style="left:323.00px;top:504.69px;font-size:24.5px;color:#000;font-weight:normal;transform:scaleX(0.9342);transform-origin:0 0;">Chicago</div><div class="t" style="left:869.50px;top:504.69px;font-size:24.5px;color:#000;font-weight:normal;transform:scaleX(0.9119);transform-origin:0 0;">2</div><div class="t" style="left:892.30px;top:504.69px;font-size:24.5px;color:#000;font-weight:normal;transform:scaleX(0.9289);transform-origin:0 0;">Service</div><div class="t" style="left:1192.10px;top:504.69px;font-size:24.5px;color:#000;font-weight:normal;transform:scaleX(0.9407);transform-origin:0 0;">No</div><div class="t" style="left:50.40px;top:539.27px;font-size:24.5px;color:#000;font-weight:normal;transform:scaleX(0.9370);transform-origin:0 0;">Emma Lee</div><div class="t" style="left:322.50px;top:539.27px;font-size:24.5px;color:#000;font-weight:normal;transform:scaleX(0.9496);transform-origin:0 0;">Los Angeles</div><div class="t" style="left:869.50px;top:539.27px;font-size:24.5px;color:#000;font-weight:normal;transform:scaleX(0.9119);transform-origin:0 0;">3</div><div class="t" style="left:892.30px;top:539.27px;font-size:24.5px;color:#000;font-weight:normal;transform:scaleX(1.0201);transform-origin:0 0;">Support</div><div class="t" style="left:1191.10px;top:539.27px;font-size:24.5px;color:#000;font-weight:normal;transform:scaleX(0.9115);transform-origin:0 0;">Yes</div><div class="t" style="left:50.40px;top:573.85px;font-size:24.5px;color:#000;font-weight:normal;transform:scaleX(0.9370);transform-origin:0 0;">Emma Lee</div><div class="t" style="left:322.50px;top:573.85px;font-size:24.5px;color:#000;font-weight:normal;transform:scaleX(0.9919);transform-origin:0 0;">Auckland</div><div class="t" style="left:869.50px;top:573.85px;font-size:24.5px;color:#000;font-weight:normal;transform:scaleX(0.9119);transform-origin:0 0;">6</div><div class="t" style="left:892.30px;top:573.85px;font-size:24.5px;color:#000;font-weight:normal;transform:scaleX(1.0201);transform-origin:0 0;">Support</div><div class="t" style="left:1191.10px;top:573.85px;font-size:24.5px;color:#000;font-weight:normal;transform:scaleX(0.9115);transform-origin:0 0;">Yes</div><div class="t" style="left:49.80px;top:608.43px;font-size:24.5px;color:#000;font-weight:normal;transform:scaleX(0.9979);transform-origin:0 0;">Liam Thompson</div><div class="t" style="left:322.50px;top:608.43px;font-size:24.5px;color:#000;font-weight:normal;transform:scaleX(0.9829);transform-origin:0 0;">Brisbane</div><div class="t" style="left:869.50px;top:608.43px;font-size:24.5px;color:#000;font-weight:normal;transform:scaleX(0.9119);transform-origin:0 0;">2</div><div class="t" style="left:892.80px;top:608.43px;font-size:24.5px;color:#000;font-weight:normal;transform:scaleX(0.9964);transform-origin:0 0;">Product</div><div class="t" style="left:1192.10px;top:608.43px;font-size:24.5px;color:#000;font-weight:normal;transform:scaleX(0.9407);transform-origin:0 0;">No</div><div class="t" style="left:49.80px;top:643.01px;font-size:24.5px;color:#000;font-weight:normal;transform:scaleX(0.9979);transform-origin:0 0;">Liam Thompson</div><div class="t" style="left:322.50px;top:643.01px;font-size:24.5px;color:#000;font-weight:normal;transform:scaleX(0.9641);transform-origin:0 0;">Glasgow</div><div class="t" style="left:869.50px;top:643.01px;font-size:24.5px;color:#000;font-weight:normal;transform:scaleX(0.9119);transform-origin:0 0;">1</div><div class="t" style="left:892.80px;top:643.01px;font-size:24.5px;color:#000;font-weight:normal;transform:scaleX(0.9964);transform-origin:0 0;">Product</div><div class="t" style="left:1191.10px;top:643.01px;font-size:24.5px;color:#000;font-weight:normal;transform:scaleX(0.9115);transform-origin:0 0;">Yes</div><div class="t" style="left:49.80px;top:677.59px;font-size:24.5px;color:#000;font-weight:normal;transform:scaleX(0.9979);transform-origin:0 0;">Liam Thompson</div><div class="t" style="left:322.50px;top:677.59px;font-size:24.5px;color:#000;font-weight:normal;transform:scaleX(0.9490);transform-origin:0 0;">Calgary</div><div class="t" style="left:869.50px;top:677.59px;font-size:24.5px;color:#000;font-weight:normal;transform:scaleX(0.9119);transform-origin:0 0;">1</div><div class="t" style="left:892.30px;top:677.59px;font-size:24.5px;color:#000;font-weight:normal;transform:scaleX(1.0201);transform-origin:0 0;">Support</div><div class="t" style="left:1192.10px;top:677.59px;font-size:24.5px;color:#000;font-weight:normal;transform:scaleX(0.9407);transform-origin:0 0;">No</div><div class="r" style="left:1546px;top:699px;width:5px;height:5px;background:#3c5aa8;"></div><div class="r" style="left:1870px;top:1182px;width:110px;height:36px;background:transparent;box-sizing:border-box;border:3px solid #217346"></div><div class="r" style="left:1973px;top:1210px;width:10px;height:10px;background:#fff;"></div><div class="r" style="left:1975px;top:1212px;width:7px;height:7px;background:#217346;"></div><div class="r" style="left:2019px;top:328px;width:29px;height:898px;background:#e6e6e6;"></div><div class="r" style="left:2023px;top:332px;width:25px;height:24px;background:#fff;box-sizing:border-box;border:1px solid #dadada"></div><svg style="left:2023px;top:332px" width="25" height="24"><polygon points="6,15 18,15 12,9" fill="#777"/></svg><div class="r" style="left:2023px;top:357px;width:25px;height:846px;background:#dcdcdc;"></div><div class="r" style="left:2023px;top:357px;width:25px;height:811px;background:#fff;box-sizing:border-box;border:1px solid #ababab"></div><div class="r" style="left:2023px;top:1202px;width:25px;height:25px;background:#fff;box-sizing:border-box;border:1px solid #dadada"></div><svg style="left:2023px;top:1202px" width="25" height="24"><polygon points="6,10 18,10 12,16" fill="#777"/></svg><div class="r" style="left:0px;top:1226px;width:2019px;height:1px;background:#9f9f9f;"></div><div class="r" style="left:0px;top:1227px;width:2019px;height:1px;background:#d4d4d4;"></div><div class="r" style="left:0px;top:1228px;width:2048px;height:39px;background:#e6e6e6;"></div><div class="r" style="left:0px;top:1264px;width:2048px;height:2px;background:#d0d0d0;"></div><div class="r" style="left:136px;top:1226px;width:257px;height:36px;background:#fff;box-sizing:border-box;border-left:1px solid #ababab;border-right:1px solid #ababab"></div><div class="r" style="left:136px;top:1258px;width:257px;height:3px;background:#217346;"></div><svg style="left:30px;top:1232px" width="60" height="26"><polygon points="6,13 13,6 13,20" fill="#c3c3c3"/><polygon points="44,6 51,13 44,20" fill="#217346"/></svg><div class="t" style="left:152.80px;top:1229.47px;font-size:22.5px;color:#217346;font-weight:bold;transform:scaleX(0.9852);transform-origin:0 0;">Cutomer Satisfaction</div><div class="t" style="left:412.20px;top:1228.40px;font-size:24px;color:#444;font-weight:normal;transform:scaleX(0.8517);transform-origin:0 0;">Jessica Davis</div><div class="t" style="left:578.80px;top:1228.40px;font-size:24px;color:#444;font-weight:normal;transform:scaleX(0.9359);transform-origin:0 0;">Liam Thompson</div><div class="t" style="left:778.60px;top:1228.40px;font-size:24px;color:#444;font-weight:normal;transform:scaleX(0.8893);transform-origin:0 0;">Emma Lee</div><div class="t" style="left:918.70px;top:1228.40px;font-size:24px;color:#444;font-weight:normal;transform:scaleX(0.8977);transform-origin:0 0;">Sheet8</div><div class="t" style="left:1027.40px;top:1228.40px;font-size:24px;color:#444;font-weight:normal;transform:scaleX(0.8833);transform-origin:0 0;">Emma Lee</div><div class="r" style="left:559px;top:1232px;width:1px;height:27px;background:#a6a6a6;"></div><div class="r" style="left:760px;top:1232px;width:1px;height:27px;background:#a6a6a6;"></div><div class="r" style="left:901px;top:1232px;width:1px;height:27px;background:#a6a6a6;"></div><div class="r" style="left:1007px;top:1232px;width:1px;height:27px;background:#a6a6a6;"></div><div class="r" style="left:1143px;top:1245px;width:3px;height:3px;background:#217346;"></div><div class="r" style="left:1151px;top:1245px;width:3px;height:3px;background:#217346;"></div><div class="r" style="left:1158px;top:1245px;width:3px;height:3px;background:#217346;"></div><svg style="left:1175px;top:1231px" width="30" height="30"><circle cx="14.5" cy="14.5" r="12.5" fill="none" stroke="#7a7a7a" stroke-width="1.6"/><rect x="8" y="13.5" width="13" height="2.2" fill="#6f6f6f"/><rect x="13.4" y="8" width="2.2" height="13" fill="#6f6f6f"/></svg><div class="r" style="left:1227px;top:1237px;width:4px;height:4px;background:#b0b0b0;"></div><div class="r" style="left:1227px;top:1244px;width:4px;height:4px;background:#b0b0b0;"></div><div class="r" style="left:1227px;top:1251px;width:4px;height:4px;background:#b0b0b0;"></div><div class="r" style="left:1251px;top:1233px;width:766px;height:24px;background:#dcdcdc;"></div><div class="r" style="left:1251px;top:1233px;width:25px;height:24px;background:#fff;box-sizing:border-box;border:1px solid #d0d0d0"></div><svg style="left:1251px;top:1233px" width="25" height="24"><polygon points="16,6 16,18 9,12" fill="#666"/></svg><div class="r" style="left:1276px;top:1233px;width:638px;height:24px;background:#fff;box-sizing:border-box;border:1px solid #ababab"></div><div class="r" style="left:1994px;top:1233px;width:24px;height:24px;background:#fff;box-sizing:border-box;border:1px solid #d0d0d0"></div><svg style="left:1994px;top:1233px" width="24" height="24"><polygon points="9,6 9,18 16,12" fill="#666"/></svg>
</body></html>
